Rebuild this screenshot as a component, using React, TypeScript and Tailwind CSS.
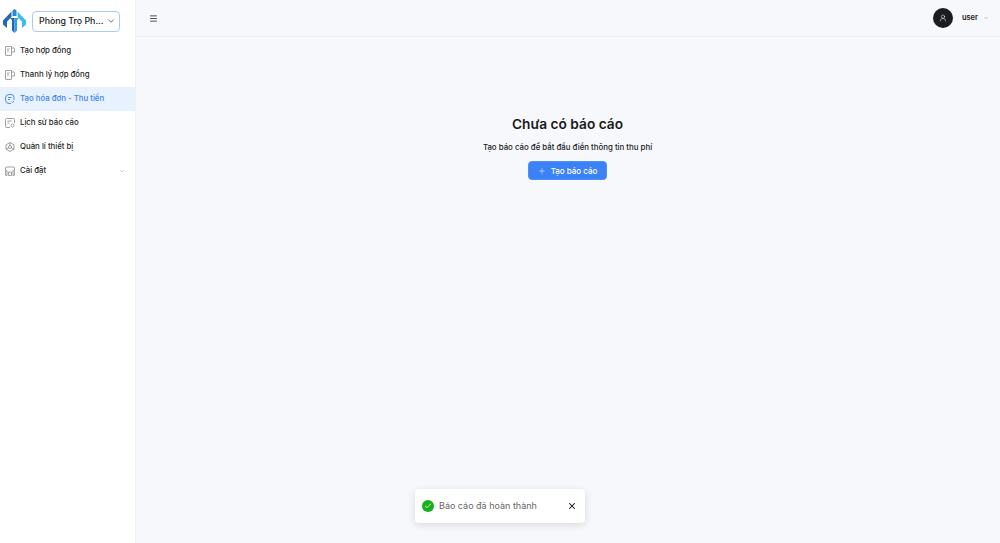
import { Check, ChevronDown, Menu, Plus, UserRound, X } from 'lucide-react'

const Logo = () => (
  <svg width="23" height="24" viewBox="0 0 23 24" fill="none">
    <path d="M0 11.500 L8.500 2.500 L8.500 8 L4 12.500 L4 19 L0 15.500 Z" fill="#2168b0" />
    <path d="M23 11.500 L14.500 2.500 L14.500 8 L19 12.500 L19 19 L23 15.500 Z" fill="#38bdf0" />
    <path d="M9.500 1.500 L11.500 0 L13.500 1.500 L13.500 7 L9.500 7 Z" fill="#2a86d0" />
    <path d="M7 9 L11.500 9 L11.500 24 L9 21.500 L9 11 Z" fill="#2168b0" />
    <path d="M11.500 9 L16 9 L14 11 L14 21.500 L11.500 24 Z" fill="#2e9fe4" />
  </svg>
)

const DocIcon = () => (
  <svg width="10" height="10" viewBox="0 0 10 10" fill="none" stroke="currentColor" strokeWidth="0.8">
    <path d="M6 9.500H1a.5.5 0 0 1-.5-.5V1A.5.5 0 0 1 1 .5h5.500V9.500" />
    <path d="M6.500 2h2.500a.5.5 0 0 1 .5.5V6H6.500M2 3h2.500M2 5h2" />
  </svg>
)

const InvoiceIcon = () => (
  <svg width="10" height="10" viewBox="0 0 10 10" fill="none" stroke="currentColor" strokeWidth="0.9">
    <path d="M9 6V3.500A3 3 0 0 0 6 .5H4A3.500 3.500 0 0 0 .5 4v2A3.500 3.500 0 0 0 4 9.500h2" />
    <path d="M3 3.500h3.500M3 5.500h2M6.500 7.500l1 1 1.500-1.500" />
  </svg>
)

const HistoryIcon = () => (
  <svg width="10" height="10" viewBox="0 0 10 10" fill="none" stroke="currentColor" strokeWidth="0.8">
    <path d="M5 9.500H1.500a1 1 0 0 1-1-1v-7a1 1 0 0 1 1-1h7a1 1 0 0 1 1 1V5" />
    <path d="M2.500 3h4M2.500 5h2" />
    <circle cx="7.500" cy="7.500" r="1.500" />
  </svg>
)

const DeviceIcon = () => (
  <svg width="10" height="10" viewBox="0 0 10 10" fill="none" stroke="currentColor" strokeWidth="0.8">
    <path d="M5 .5L9 2.800V7.200L5 9.500L1 7.200V2.800Z" />
    <circle cx="5" cy="5" r="1.500" />
    <path d="M5 .5v3M1 7.200l2.700-1.400M9 7.200L6.300 5.800" />
  </svg>
)

const SettingIcon = () => (
  <svg width="10" height="10" viewBox="0 0 10 10" fill="none" stroke="currentColor" strokeWidth="0.8">
    <path d="M.5 4V2a1 1 0 0 1 1-1h7a1 1 0 0 1 1 1v2" />
    <path d="M.5 4.500h1.500v5h-1a.5.5 0 0 1-.5-.5zM9.500 4.500H8v5h1a.5.5 0 0 0 .5-.5z" />
    <path d="M3.500 6h3v3.500h-3z" />
  </svg>
)

const menuItems = [
  { label: 'Tạo hợp đồng', icon: <DocIcon /> },
  { label: 'Thanh lý hợp đồng', icon: <DocIcon /> },
  { label: 'Tạo hóa đơn - Thu tiền', icon: <InvoiceIcon />, active: true },
  { label: 'Lịch sử báo cáo', icon: <HistoryIcon /> },
  { label: 'Quản lí thiết bị', icon: <DeviceIcon /> },
  { label: 'Cài đặt', icon: <SettingIcon />, hasArrow: true },
]

export default function App() {
  return (
    <div className="relative flex h-[543px] w-full overflow-hidden bg-[#f7f8fc] font-['Inter',sans-serif] text-[#1a1a1a]">
      {/* Sidebar */}
      <aside className="flex w-[136px] shrink-0 flex-col border-r border-[#eef0f4] bg-white">
        <div className="flex h-[39px] items-center gap-[6px] pl-[3px] pt-[3px]">
          <Logo />
          <div className="flex h-[21px] w-[88px] items-center justify-between rounded-[4px] border border-[#a8cbf7] pl-[6px] pr-[3px]">
            <span className="whitespace-nowrap text-[8.800px] font-medium">Phòng Trọ Ph...</span>
            <ChevronDown size={10} strokeWidth={1.5} className="shrink-0" />
          </div>
        </div>
        <nav className="flex flex-col">
          {menuItems.map((item) => (
            <div
              key={item.label}
              className={
                item.active
                  ? 'flex h-[24px] items-center gap-[5px] bg-[#e8f1fe] pl-[5px] pr-[9px] text-[#3b82f6]'
                  : 'flex h-[24px] items-center gap-[5px] pl-[5px] pr-[9px] text-[#1f1f1f]'
              }
            >
              <span className={item.active ? 'text-[#3b82f6]' : 'text-[#8a8a8a]'}>{item.icon}</span>
              <span className="flex-1 text-[7.800px] font-medium">{item.label}</span>
              {item.hasArrow && <ChevronDown size={8} strokeWidth={1.2} className="text-[#8a8a8a]" />}
            </div>
          ))}
        </nav>
      </aside>

      <div className="flex min-w-0 flex-1 flex-col">
        {/* Header */}
        <header className="flex h-[37px] shrink-0 items-center justify-between border-b border-[#eef0f4] pl-[13px] pr-[11px]">
          <Menu size={9} strokeWidth={2} />
          <div className="flex items-center">
            <div className="flex h-[20px] w-[20px] items-center justify-center rounded-full bg-[#1c1c1e] text-white">
              <UserRound size={8} strokeWidth={1.5} />
            </div>
            <span className="ml-[9px] text-[7.500px] font-semibold">user</span>
            <ChevronDown size={6} strokeWidth={1.5} className="ml-[5px] text-[#777]" />
          </div>
        </header>

        {/* Empty state */}
        <main className="flex flex-1 flex-col items-center pr-[1px] pt-[77px]">
          <h1 className="text-[13.700px] font-semibold leading-[20px]">Chưa có báo cáo</h1>
          <p className="mt-[5px] pt-[1px] text-[7.850px] font-medium leading-[14px]">Tạo báo cáo để bắt đầu điền thông tin thu phí</p>
          <button className="mt-[7px] flex h-[19px] w-[79px] items-center justify-center gap-[5px] rounded-[4px] border border-[#4f90f7] bg-[#3b82f6] text-[8px] font-medium text-white">
            <Plus size={8} strokeWidth={1.5} />
            Tạo báo cáo
          </button>
        </main>
      </div>

      {/* Toast */}
      <div className="absolute left-[415px] top-[489px] flex h-[34px] w-[170px] items-center rounded-[4px] bg-white pl-[7px] pr-[8px] shadow-[0_2px_8px_rgba(0,0,0,0.12)]">
        <span className="flex h-[12px] w-[12px] items-center justify-center rounded-full bg-[#16b01a] text-white">
          <Check size={8} strokeWidth={2.5} />
        </span>
        <span className="ml-[5px] flex-1 text-[9px] text-[#666]">Báo cáo đã hoàn thành</span>
        <X size={10} strokeWidth={2.5} className="text-[#111]" />
      </div>
    </div>
  )
}
